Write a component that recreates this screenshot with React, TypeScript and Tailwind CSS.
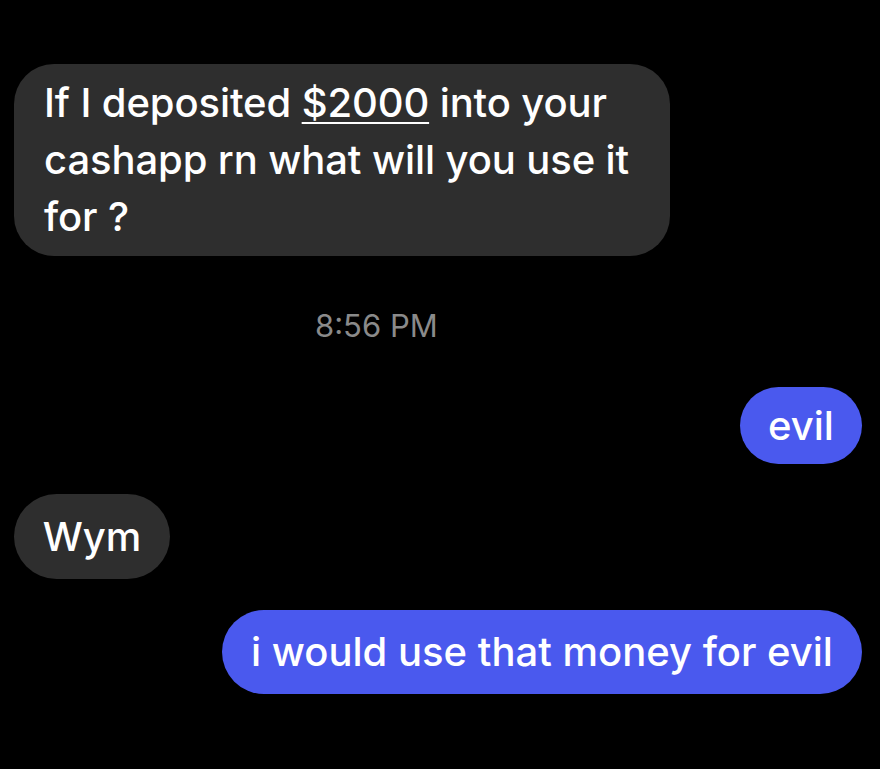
import React from "react";

const font = { fontFamily: "Inter, 'Liberation Sans', Arial, sans-serif" };

function Incoming({ children, className = "" }: { children: React.ReactNode; className?: string }) {
  return (
    <div className={`self-start bg-[#2e2e2e] text-white ${className}`}>{children}</div>
  );
}

function Outgoing({ children, className = "" }: { children: React.ReactNode; className?: string }) {
  return (
    <div className={`self-end bg-[#4a59ee] text-white ${className}`}>{children}</div>
  );
}

export default function App() {
  return (
    <div className="w-[880px] h-[769px] bg-black overflow-hidden" style={font}>
      <div className="flex flex-col pl-[14px] pr-[18px] pt-[64px]">
        <Incoming className="w-[656px] h-[192px] rounded-[40px] pl-[30px] pr-[20px] pt-[10px] text-[40px] font-[550] leading-[57px] tracking-[-0.1px]">
          If I deposited <span className="underline decoration-[2px] underline-offset-[5px]">$2000</span> into your cashapp rn what will you use it for ?
        </Incoming>

        <div className="self-start ml-[301px] mt-[52px] text-[31px] leading-[36px] text-[#8a8a8a]">
          8:56 PM
        </div>

        <Outgoing className="mt-[43px] h-[77px] w-[122px] rounded-full flex items-center justify-center text-[40px] font-[550]">
          evil
        </Outgoing>

        <Incoming className="mt-[30px] h-[85px] w-[156px] rounded-full flex items-center justify-center text-[40px] font-[550]">
          Wym
        </Incoming>

        <Outgoing className="mt-[31px] h-[84px] w-[640px] rounded-full flex items-center justify-center text-[40px] font-[550]">
          i would use that money for evil
        </Outgoing>
      </div>
    </div>
  );
}
